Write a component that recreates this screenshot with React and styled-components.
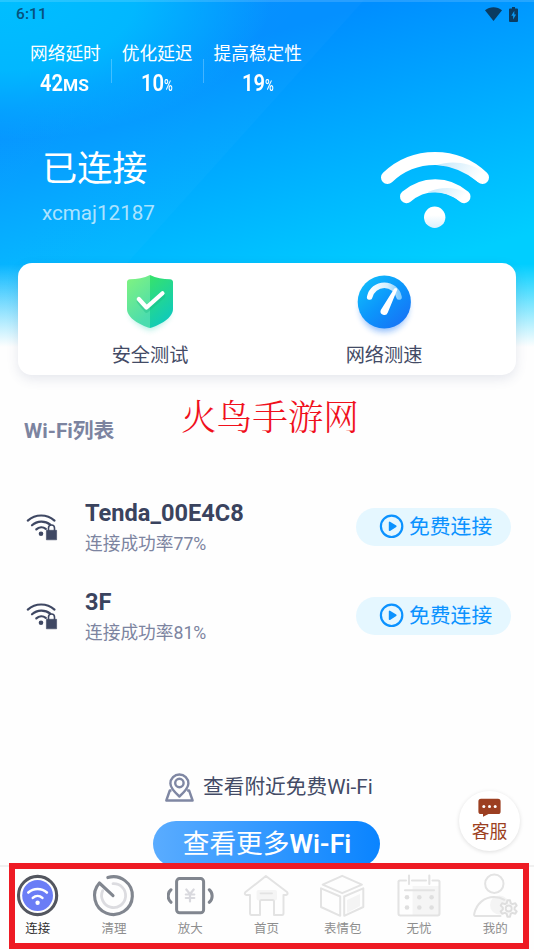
import React from 'react'
import styled, { createGlobalStyle } from 'styled-components';

const GlobalStyle = createGlobalStyle`
  * {
    box-sizing: border-box;
  }

  body {
    margin: 0;
    overflow: hidden;
    background: white;
    font-family: Roboto, "Noto Sans CJK SC", sans-serif;
  }
`;

const Screen = styled.div`
  position: relative;
  display: flex;
  flex-direction: column;
  width: 534px;
  height: 950px;
  overflow: hidden;
  background: #fefefe;
`;

const Content = styled.main`
  display: flex;
  flex-direction: column;
  height: 865px;
  overflow: hidden;
`;

const Hero = styled.header`
  height: 348px;
  flex: none;
  border-top: 2px solid rgba(255, 255, 255, 0.14);
  background:
    linear-gradient(180deg, rgba(254, 254, 254, 0) 264px, #fefefe 347px),
    radial-gradient(ellipse 270px 140px at 0 0, #00beff 0, rgba(0, 190, 255, 0.85) 50%, rgba(0, 180, 255, 0) 100%),
    linear-gradient(132deg, rgba(255, 255, 255, 0.03) 0, rgba(255, 255, 255, 0.02) 270px, rgba(255, 255, 255, 0) 271px),
    linear-gradient(164deg, #008eff 22%, #00ceff 77%);
  background-origin: border-box;
`;

const StatusBar = styled.div`
  display: flex;
  align-items: center;
  height: 24px;
  padding: 0 15px 0 16px;
  color: #07527c;
`;

const Clock = styled.span`
  flex: 1;
  font-size: 15.5px;
  font-weight: 500;
  letter-spacing: 0.1px;
`;

const Stats = styled.div`
  display: flex;
  padding: 15px 0 0 30px;
`;

const Stat = styled.div`
  display: flex;
  flex-direction: column;
  align-items: center;
  color: white;
  font-size: 17.7px;
  line-height: 26px;
  white-space: nowrap;
`;

const StatValue = styled.div`
  display: flex;
  align-items: baseline;
  height: 30px;
  margin-top: 1px;
  line-height: 30px;
`;

const StatNumber = styled.span`
  width: 23px;
  font-size: 24px;
  font-weight: 600;
  transform: scaleX(0.84);
  transform-origin: left;
`;

const StatUnit = styled.span`
  font-size: 17px;
  font-weight: ${({wide}) => wide ? 700 : 500};
  width: ${({wide}) => wide ? 27 : 9}px;
  transform: scaleX(${({wide}) => wide ? 1.02 : 0.7});
  transform-origin: left;
`;

const StatDivider = styled.div`
  width: 1px;
  height: 24px;
  margin: 18px 10px 0;
  background: rgba(255, 255, 255, 0.25);
`;

const Connection = styled.div`
  display: flex;
  justify-content: space-between;
  padding: 31px 44px 0 42px;
  color: white;
`;

const ConnectionState = styled.div`
  margin-top: 18px;
  font-size: 35.2px;
  line-height: 44px;
`;

const ConnectionName = styled.div`
  margin-top: 10px;
  font-size: 20.6px;
  line-height: 24px;
  color: rgba(255, 255, 255, 0.68);
`;

const HeroWifi = styled.svg`
  width: 110px;
  height: 82px;
  margin-top: 21px;
`;

const Card = styled.section`
  position: relative;
  display: flex;
  flex: none;
  height: 112px;
  margin: -85px 18px 0;
  padding: 0 15px;
  border-radius: 14px;
  background: white;
  box-shadow: 0 4px 12px rgba(60, 80, 120, 0.13);
`;

const CardAction = styled.div`
  display: flex;
  flex: 1;
  flex-direction: column;
  align-items: center;
  padding-top: 7px;
  color: #434b66;
  font-size: 19.2px;
  line-height: 28px;

  svg {
    flex: none;
    width: 66px;
    height: 66px;
    margin-bottom: 6px;
    overflow: visible;
  }
`;

const ListTitle = styled.h2`
  flex: none;
  margin: 42px 0 36px 24px;
  color: #7c84a0;
  font-size: 20.8px;
  font-weight: 700;
  line-height: 29px;
`;

const NetworkRow = styled.div`
  display: flex;
  flex: none;
  align-items: center;
  height: 89px;
  padding: 0 23px 0 26px;
`;

const NetworkInfo = styled.div`
  flex: 1;
  margin-left: 27px;
  padding-top: 3px;
`;

const NetworkName = styled.div`
  color: #3a435e;
  font-size: 23.6px;
  font-weight: 700;
  line-height: 30px;
`;

const NetworkRate = styled.div`
  margin-top: 2px;
  color: #7c84a0;
  font-size: 17.7px;
  line-height: 28px;
`;

const ConnectButton = styled.button`
  display: flex;
  align-items: center;
  width: 155px;
  height: 38px;
  padding: 0 0 0 23px;
  border: 0;
  border-radius: 19px;
  background: #e5f7ff;
  color: #0b92ff;
  font: inherit;
  font-size: 20.8px;
  line-height: 38px;
  white-space: nowrap;

  svg {
    flex: none;
    margin-right: 5px;
  }
`;

const Nearby = styled.div`
  display: flex;
  flex: none;
  align-items: center;
  height: 34px;
  margin: 110px 0 17px 164px;
  color: #434b66;
  font-size: 20.7px;
  line-height: 34px;

  svg {
    margin-right: 8px;
  }
`;

const MoreButton = styled.button`
  flex: none;
  width: 227px;
  height: 46px;
  margin-left: 153px;
  padding: 0 0 0 1px;
  border: 0;
  border-radius: 23px;
  background: linear-gradient(90deg, #5aacff, #0a84ff);
  color: white;
  font: inherit;
  font-size: 26.7px;
  line-height: 44px;
  white-space: nowrap;

  b {
    font-weight: 600;
  }
`;

const Watermark = styled.div`
  position: absolute;
  left: 181px;
  top: 390px;
  color: #f0101c;
  font-family: "Noto Serif CJK SC", "Noto Sans CJK SC", serif;
  font-size: 35.6px;
  font-weight: 300;
  line-height: 50px;
  white-space: nowrap;
`;

const SupportButton = styled.button`
  position: absolute;
  left: 459px;
  top: 791px;
  display: flex;
  flex-direction: column;
  align-items: center;
  width: 61px;
  height: 60px;
  padding: 7px 0 0;
  border: 0;
  border-radius: 50%;
  background: white;
  box-shadow: 0 1px 4px rgba(0, 0, 0, 0.13);
  color: #9c3f21;
  font: inherit;
  font-size: 17.8px;
  line-height: 24px;

  svg {
    flex: none;
    margin-bottom: 3px;
  }
`;

const TabBar = styled.nav`
  display: flex;
  height: 85px;
  border-top: 2px solid #f0f0f0;
  background: #fefefe;
`;

const Tab = styled.div`
  display: flex;
  flex: 1 1 0;
  flex-direction: column;
  align-items: center;
  padding-top: 5px;
  color: ${({active}) => active ? '#2f2f2f' : '#8e8e8e'};
  font-size: 12.5px;
  line-height: 17px;
  text-indent: -1px;

  svg {
    width: 48px;
    height: 48px;
    fill: none;
    stroke-linecap: round;
    stroke-linejoin: round;
  }
`;

const Highlight = styled.div`
  position: absolute;
  left: 9px;
  top: 863px;
  width: 520px;
  height: 86px;
  border: 6px solid #ee1b24;
  pointer-events: none;
`;

const SignalIcon = () => (
    <svg width="17" height="14" viewBox="0 0 17 14">
        <path d="M0 3.2C4.8-.9 12.2-.9 17 3.2L8.5 14z" fill="#0a3c62" />
    </svg>
);

const BatteryIcon = () => (
    <svg width="17" height="15" viewBox="-7 0 17 15">
        <path d="M3 0h3v1.5h2a1 1 0 0 1 1 1V14a1 1 0 0 1-1 1H1a1 1 0 0 1-1-1V2.500a1 1 0 0 1 1-1h2z" fill="#0a3c62" />
        <path d="M5.300 3.800L2.300 8.800h1.800v3.600l3-5H5.300z" fill="#0a98f0" />
    </svg>
);

const ShieldIcon = () => (
    <svg viewBox="0 0 66 66">
        <defs>
            <linearGradient id="shieldLeft" x1="0" y1="0" x2="0.4" y2="1">
                <stop offset="0" stopColor="#82f47e" />
                <stop offset="1" stopColor="#4bdcae" />
            </linearGradient>
            <linearGradient id="shieldRight" x1="0" y1="0" x2="0.4" y2="1">
                <stop offset="0" stopColor="#37e36a" />
                <stop offset="1" stopColor="#0fcaba" />
            </linearGradient>
            <filter id="shieldShadow" x="-30%" y="-30%" width="160%" height="160%">
                <feGaussianBlur stdDeviation="3" />
            </filter>
        </defs>
        <path d="M33 60C24 56 14 50 13 42h40c-1 8-11 14-20 18z" fill="#20d0b0" opacity="0.4" filter="url(#shieldShadow)" />
        <path d="M33 5c-6 3-13 4-20 4.300Q10 9.800 10 12v27c0 9 13 16 23 19z" fill="url(#shieldLeft)" />
        <path d="M33 5c6 3 13 4 20 4.300q3 .5 3 2.700v27c0 9-13 16-23 19z" fill="url(#shieldRight)" />
        <path d="M22 30l7.500 9L46 24.500" transform="translate(0 1.500)" fill="none" stroke="#14b884" strokeOpacity="0.35" strokeWidth="4.600" strokeLinecap="round" strokeLinejoin="round" />
        <path d="M21.800 29l7.700 8.500L45.500 23.300" fill="none" stroke="white" strokeWidth="4.200" strokeLinecap="round" strokeLinejoin="round" />
    </svg>
);

const GaugeIcon = () => (
    <svg viewBox="0 0 66 66">
        <defs>
            <linearGradient id="gaugeFill" x1="0.15" y1="0.1" x2="0.85" y2="0.9">
                <stop offset="0" stopColor="#10b9fb" />
                <stop offset="0.5" stopColor="#0c95fb" />
                <stop offset="1" stopColor="#1675f6" />
            </linearGradient>
            <linearGradient id="gaugeArc" x1="0" y1="0" x2="1" y2="0">
                <stop offset="0" stopColor="white" />
                <stop offset="0.6" stopColor="#d4effe" />
                <stop offset="1" stopColor="#83ccfc" />
            </linearGradient>
            <filter id="gaugeShadow" x="-30%" y="-30%" width="160%" height="160%">
                <feGaussianBlur stdDeviation="3" />
            </filter>
        </defs>
        <circle cx="33.300" cy="38" r="24" fill="#1675f6" opacity="0.45" filter="url(#gaugeShadow)" />
        <circle cx="33.300" cy="32" r="26.600" fill="url(#gaugeFill)" />
        <path d="M18.700 27A15 15 0 0 1 48 27" fill="none" stroke="url(#gaugeArc)" strokeWidth="5.600" strokeLinecap="round" />
        <path d="M43.300 18.500Q46 17 46.300 19.500L36.800 42.500a3.700 3.700 0 0 1-7-2.600z" fill="white" />
    </svg>
);

const WifiLockIcon = () => (
    <svg width="32" height="28" viewBox="0 0 32 28">
        <g fill="none" stroke="#3f4863" strokeWidth="2.200" strokeLinecap="round">
            <path d="M1.800 7.600C9.500.800 20.800.800 28.500 7.600" />
            <path d="M6 12.300c5.300-4.800 13-4.800 18.300-.6" />
            <path d="M10.300 16.400c2.800-2.700 6.700-2.700 9.500-.6" />
        </g>
        <circle cx="15" cy="20.800" r="2.300" fill="#3f4863" />
        <path d="M20.400 17.300h10.200v9.500h-10.200z" fill="#3f4863" stroke="#3f4863" strokeLinejoin="round" strokeWidth="0.600" />
        <path d="M22.500 18v-3a3 3 0 0 1 6 0V18" fill="none" stroke="#3f4863" strokeWidth="1.600" />
    </svg>
);

const PlayIcon = () => (
    <svg width="25" height="25" viewBox="0 0 25 25">
        <circle cx="12.600" cy="12.300" r="10.700" fill="none" stroke="#0b92ff" strokeWidth="2.200" />
        <path d="M10.600 8.400v7.900l6.200-4z" fill="#0b92ff" stroke="#0b92ff" strokeWidth="1.600" strokeLinejoin="round" />
    </svg>
);

const PinIcon = () => (
    <svg width="31" height="31" viewBox="0 0 31 31">
        <g fill="none" stroke="#7f87a3" strokeWidth="2.400" strokeLinejoin="round">
            <path d="M7.500 18.500H5.800L2.300 28.500h26.300l-3.500-10h-2" />
            <path d="M15.400 24.500c-5-4.500-9-8.500-9-13a9 9 0 0 1 18 0c0 4.500-4 8.500-9 13z" />
            <circle cx="15.400" cy="11" r="4.200" />
        </g>
    </svg>
);

const ChatIcon = () => (
    <svg width="23" height="19" viewBox="0 0 23 19">
        <path d="M3 .8h17a2.600 2.600 0 0 1 2.600 2.600v10A2.600 2.600 0 0 1 20 16h-9.500L5 18.800V16H3A2.600 2.600 0 0 1 .4 13.400v-10A2.600 2.600 0 0 1 3 .8z" fill="#9c3f21" />
        <g fill="white">
            <circle cx="5.800" cy="8.500" r="1.500" />
            <circle cx="11.500" cy="8.500" r="1.500" />
            <circle cx="17.200" cy="8.500" r="1.500" />
        </g>
    </svg>
);

const TabWifiIcon = () => (
    <svg viewBox="0 0 48 48">
        <circle cx="23.600" cy="23.500" r="19.100" stroke="#53565f" strokeWidth="3.100" />
        <circle cx="23.600" cy="23.500" r="15.400" fill="#6b7df6" />
        <path d="M14.300 20.500c5.300-4.700 13.300-4.700 18.600 0M18.800 25.900c2.800-2.500 6.800-2.500 9.600 0" stroke="white" strokeWidth="2.600" />
        <circle cx="23.600" cy="30.800" r="2.200" fill="white" />
    </svg>
);

const TabCleanIcon = () => (
    <svg viewBox="0 0 48 48">
        <path d="M23 11.600a12 12 0 1 1-10.300 7" stroke="#dcdce0" strokeWidth="2.800" />
        <path d="M17.800 5.600a18.900 18.900 0 1 1-8.400 5.400L23 23.600" stroke="#81868f" strokeWidth="3.100" />
    </svg>
);

const TabZoomIcon = () => (
    <svg viewBox="0 0 48 48">
        <g stroke="#81868f" strokeWidth="3">
            <rect x="9.600" y="6.600" width="27" height="34.200" rx="3" />
            <path d="M4 17.800c-3.800 3-3.800 9.500 0 12.500M42.300 17.800c3.800 3 3.800 9.500 0 12.500" />
        </g>
        <path d="M19.300 17.500l3.700 4.500 3.700-4.500M18.800 22.500h8.500M18.800 26h8.500M23 22v7.500" stroke="#d9d9de" strokeWidth="2.200" />
    </svg>
);

const TabHomeIcon = () => (
    <svg viewBox="0 0 48 48">
        <rect x="13.500" y="18" width="20.500" height="10.500" rx="2" fill="#f5f5f5" />
        <path d="M22.900 4L44 20q1.500 2.300-1 3h-2.500v18q0 2-1.500 2H31V29.500q0-1.500-1.500-1.500h-11q-1.500 0-1.500 1.500V43H8.500q-1.500 0-1.500-2V23H3.300q-2.300-.7-1-2.700z" stroke="#e3e3e3" strokeWidth="2" />
        <path d="M17.500 21.300h11.500" stroke="#e3e3e3" strokeWidth="1.800" />
    </svg>
);

const TabCubeIcon = () => (
    <svg viewBox="0 0 48 48">
        <path d="M28 28l13-6v12l-13 7z" fill="#f4f4f4" />
        <g stroke="#e3e3e3" strokeWidth="2">
            <path d="M23.200 3.800l19.700 8.800-19.700 8.600-19.500-8.600z" />
            <path d="M2 16.300l19.200 8.200v19.300L2 35z" />
            <path d="M44.300 16.300l-19.100 8.200v19.300L44.300 35z" />
        </g>
    </svg>
);

const TabCalendarIcon = () => (
    <svg viewBox="0 0 48 48">
        <rect x="16.500" y="14" width="27" height="29" fill="#f5f5f5" />
        <path d="M10 8.500H4Q2.500 8.500 2.500 10v31.500Q2.500 43.500 4.500 43.500h37q2 0 2-2V10q0-1.500-1.500-1.500h-5.500M16 8.500h14M13 3.500v8.500M33.300 3.500v8.500M9 18.300h29" stroke="#e3e3e3" strokeWidth="2.100" />
        <g fill="#dfdfdf">
            {[11, 23.3, 35.6].map(cx => [25.3, 35.5].map(cy => <circle key={`${cx}-${cy}`} cx={cx} cy={cy} r="2.300" />))}
        </g>
    </svg>
);

const TabUserIcon = () => (
    <svg viewBox="0 0 48 48">
        <circle cx="27.500" cy="33" r="9.500" fill="#f4f4f4" />
        <circle cx="22.300" cy="11.800" r="9.200" stroke="#e3e3e3" strokeWidth="2" />
        <path d="M28.500 44H3.500Q1.800 44 2.200 42C4.500 31 13 25 22 25q6 0 10.500 2.800" stroke="#e3e3e3" strokeWidth="2" />
        <path
            d="M34.700 31.200l.7-2.900h2.600l.7 2.900 1.700.9 2.900-.9 1.400 2.300-2.100 2.100v1.800l2.100 2.100-1.400 2.300-2.900-.9-1.700.9-.7 2.900h-2.600l-.7-2.900-1.700-.9-2.900.9-1.400-2.300 2.100-2.100v-1.800l-2.100-2.100 1.400-2.300 2.900.9z"
            fill="#fafafa"
            stroke="#dedede"
            strokeWidth="2"
        />
        <circle cx="36.700" cy="36.500" r="3" stroke="#dedede" strokeWidth="1.800" />
    </svg>
);

const stats = [
    { label: '网络延时', value: 42, unit: 'MS' },
    { label: '优化延迟', value: 10, unit: '%' },
    { label: '提高稳定性', value: 19, unit: '%' },
];

const networks = [
    { name: 'Tenda_00E4C8', rate: '77%' },
    { name: '3F', rate: '81%' },
];

const tabs = [
    { label: '连接', Icon: TabWifiIcon, active: true },
    { label: '清理', Icon: TabCleanIcon },
    { label: '放大', Icon: TabZoomIcon },
    { label: '首页', Icon: TabHomeIcon },
    { label: '表情包', Icon: TabCubeIcon },
    { label: '无忧', Icon: TabCalendarIcon },
    { label: '我的', Icon: TabUserIcon },
];

const HeroHeader = () => (
    <Hero>
        <StatusBar>
            <Clock>6:11</Clock>
            <SignalIcon />
            <BatteryIcon />
        </StatusBar>
        <Stats>
            {stats.map(({ label, value, unit }, i) => <React.Fragment key={label}>
                {i > 0 && <StatDivider />}
                <Stat>
                    {label}
                    <StatValue>
                        <StatNumber>{value}</StatNumber>
                        <StatUnit wide={unit === 'MS'}>{unit}</StatUnit>
                    </StatValue>
                </Stat>
            </React.Fragment>)}
        </Stats>
        <Connection>
            <div>
                <ConnectionState>已连接</ConnectionState>
                <ConnectionName>xcmaj12187</ConnectionName>
            </div>
            <HeroWifi viewBox="0 0 110 82">
                <defs>
                    <linearGradient id="wifiShade" x1="0" y1="0" x2="1" y2="0.3">
                        <stop offset="0" stopColor="#c4e8fb" />
                        <stop offset="1" stopColor="white" />
                    </linearGradient>
                    <linearGradient id="wifiDot" x1="0" y1="0" x2="0" y2="1">
                        <stop offset="0.4" stopColor="white" />
                        <stop offset="1" stopColor="#dbf1fd" />
                    </linearGradient>
                </defs>
                <g fill="none" stroke="white" strokeWidth="13" strokeLinecap="round">
                    <path d="M7.500 27.500a69 69 0 0 1 95 0" />
                    <path d="M26.500 46.700a43 43 0 0 1 57.500 0" />
                </g>
                <path d="M57 15C70 11 88 11 105 23L98 32Q80 17 57 15z" fill="url(#wifiShade)" />
                <path d="M48 42C60 37 74 36 88 43L80 51Q66 41 48 42z" fill="url(#wifiShade)" />
                <circle cx="54.700" cy="67.300" r="10.700" fill="url(#wifiDot)" />
            </HeroWifi>
        </Connection>
    </Hero>
);

export default function App() {
    return (
        <Screen>
            <GlobalStyle />
            <Content>
                <HeroHeader />
                <Card>
                    <CardAction><ShieldIcon />安全测试</CardAction>
                    <CardAction><GaugeIcon />网络测速</CardAction>
                </Card>
                <ListTitle>Wi-Fi列表</ListTitle>
                {networks.map(({ name, rate }) => <NetworkRow key={name}>
                    <WifiLockIcon />
                    <NetworkInfo>
                        <NetworkName>{name}</NetworkName>
                        <NetworkRate>连接成功率{rate}</NetworkRate>
                    </NetworkInfo>
                    <ConnectButton><PlayIcon />免费连接</ConnectButton>
                </NetworkRow>)}
                <Nearby><PinIcon />查看附近免费Wi-Fi</Nearby>
                <MoreButton>查看更多<b>Wi-Fi</b></MoreButton>
            </Content>
            <TabBar>
                {tabs.map(({ label, Icon, active }) => <Tab key={label} active={active}>
                    <Icon />
                    {label}
                </Tab>)}
            </TabBar>
            <Watermark>火鸟手游网</Watermark>
            <SupportButton><ChatIcon />客服</SupportButton>
            <Highlight />
        </Screen>
    )
}
